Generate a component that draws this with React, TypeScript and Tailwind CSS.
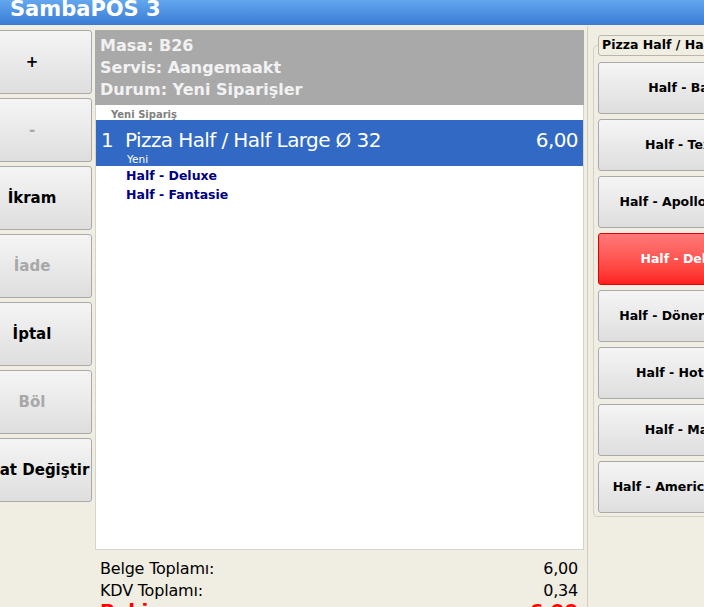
import React from "react";

const font = { fontFamily: '"DejaVu Sans", Verdana, sans-serif' };

function LeftButton({ label, disabled }: { label: string; disabled?: boolean }) {
  return (
    <div
      className={`h-[64px] flex items-center justify-center rounded-[3px] border border-[#a9a9a9] bg-linear-to-b from-[#f5f5f5] to-[#dedede] text-[15px] font-bold whitespace-nowrap ${
        disabled ? "text-[#a8a8a8]" : "text-black"
      }`}
    >
      {label}
    </div>
  );
}

function RightButton({ label, active }: { label: string; active?: boolean }) {
  return (
    <div
      className={`h-[52px] flex items-center justify-center rounded-[3px] border text-[12.5px] font-bold whitespace-nowrap ${
        active
          ? "border-[#e00000] bg-linear-to-b from-[#ff7878] to-[#ff1c1c] text-white"
          : "border-[#a9a9a9] bg-linear-to-b from-[#f5f5f5] to-[#dedede] text-black"
      }`}
    >
      {label}
    </div>
  );
}

export default function App() {
  const left = [
    { label: "+" },
    { label: "-", disabled: true },
    { label: "İkram" },
    { label: "İade", disabled: true },
    { label: "İptal" },
    { label: "Böl", disabled: true },
    { label: "Fiyat Değiştir" },
  ];
  const right = [
    { label: "Half - Barn" },
    { label: "Half - Texas" },
    { label: "Half - Apollo Tonno" },
    { label: "Half - Deluxe", active: true },
    { label: "Half - Döner Kebab" },
    { label: "Half - Hot Dog" },
    { label: "Half - Mario" },
    { label: "Half - Americana Hot" },
  ];
  return (
    <div className="w-[704px] h-[607px] overflow-hidden bg-[#f0ede2] flex flex-col" style={font}>
      <div className="h-[25px] shrink-0 bg-linear-to-b from-[#63a7ef] to-[#3a7bd4] pl-[10px] overflow-hidden">
        <div className="text-[21px] font-bold text-white leading-[19px]">SambaPOS 3</div>
      </div>
      <div className="flex flex-1 pt-[5px] min-h-0">
        <div className="w-[120px] shrink-0 ml-[-28px] flex flex-col gap-[4px]">
          {left.map((b) => (
            <LeftButton key={b.label} label={b.label} disabled={b.disabled} />
          ))}
        </div>
        <div className="w-[489px] shrink-0 ml-[3px] flex flex-col">
          <div className="h-[75px] shrink-0 bg-[#a9a9a9] pl-[5px] pt-[5px] text-[16px] font-bold text-[#f2f2f2] leading-[22px]">
            <div>Masa: B26</div>
            <div>Servis: Aangemaakt</div>
            <div>Durum: Yeni Siparişler</div>
          </div>
          <div className="h-[445px] shrink-0 bg-white border-x border-b border-[#d6d3c8]">
            <div className="h-[15px] pl-[15px] text-[10px] font-bold text-[#808080] leading-[14px] pt-[3px]">
              Yeni Sipariş
            </div>
            <div className="h-[46px] bg-[#3169c4] text-white flex pt-[8px] pl-[5px] pr-[5px]">
              <div className="w-[24px] text-[20px] leading-[24px] tracking-[-0.6px]">1</div>
              <div className="flex-1">
                <div className="text-[20px] leading-[24px] tracking-[-0.6px]">Pizza Half / Half Large Ø 32</div>
                <div className="text-[10.5px] leading-[13px] mt-[1px] pl-[2px]">Yeni</div>
              </div>
              <div className="text-[20px] leading-[24px] tracking-[-0.6px]">6,00</div>
            </div>
            <div className="pl-[30px] text-[12.5px] font-bold text-[#000080] leading-[19px]">
              <div>Half - Deluxe</div>
              <div>Half - Fantasie</div>
            </div>
          </div>
          <div className="pt-[8px] pl-[5px] pr-[6px] text-[16px] leading-[22px] tracking-[-0.2px] text-black">
            <div className="flex justify-between">
              <span>Belge Toplamı:</span>
              <span>6,00</span>
            </div>
            <div className="flex justify-between">
              <span>KDV Toplamı:</span>
              <span>0,34</span>
            </div>
            <div className="flex justify-between text-[20px] font-bold text-[#ff0000] leading-[20px] mt-[-1px]">
              <span>Bakiye:</span>
              <span>6,00</span>
            </div>
          </div>
        </div>
        <div className="w-px shrink-0 ml-[3px] bg-[#d2cec0] mt-[-4px]" />
        <div className="w-[186px] shrink-0 ml-[5px] mt-[5px]">
          <div className="relative z-10 ml-[5px] h-[21px] flex w-fit items-center rounded-[3px] border border-[#b9b6aa] bg-[#f0ede2] px-[3px] text-[12.5px] font-bold text-black whitespace-nowrap">
            Pizza Half / Half Large Ø 32
          </div>
          <div className="mt-[-11px] rounded-[4px] border border-[#d3d0c4] px-[4px] pt-[16px] pb-[3px] flex flex-col gap-[5px]">
            {right.map((b) => (
              <RightButton key={b.label} label={b.label} active={b.active} />
            ))}
          </div>
        </div>
      </div>
    </div>
  );
}
